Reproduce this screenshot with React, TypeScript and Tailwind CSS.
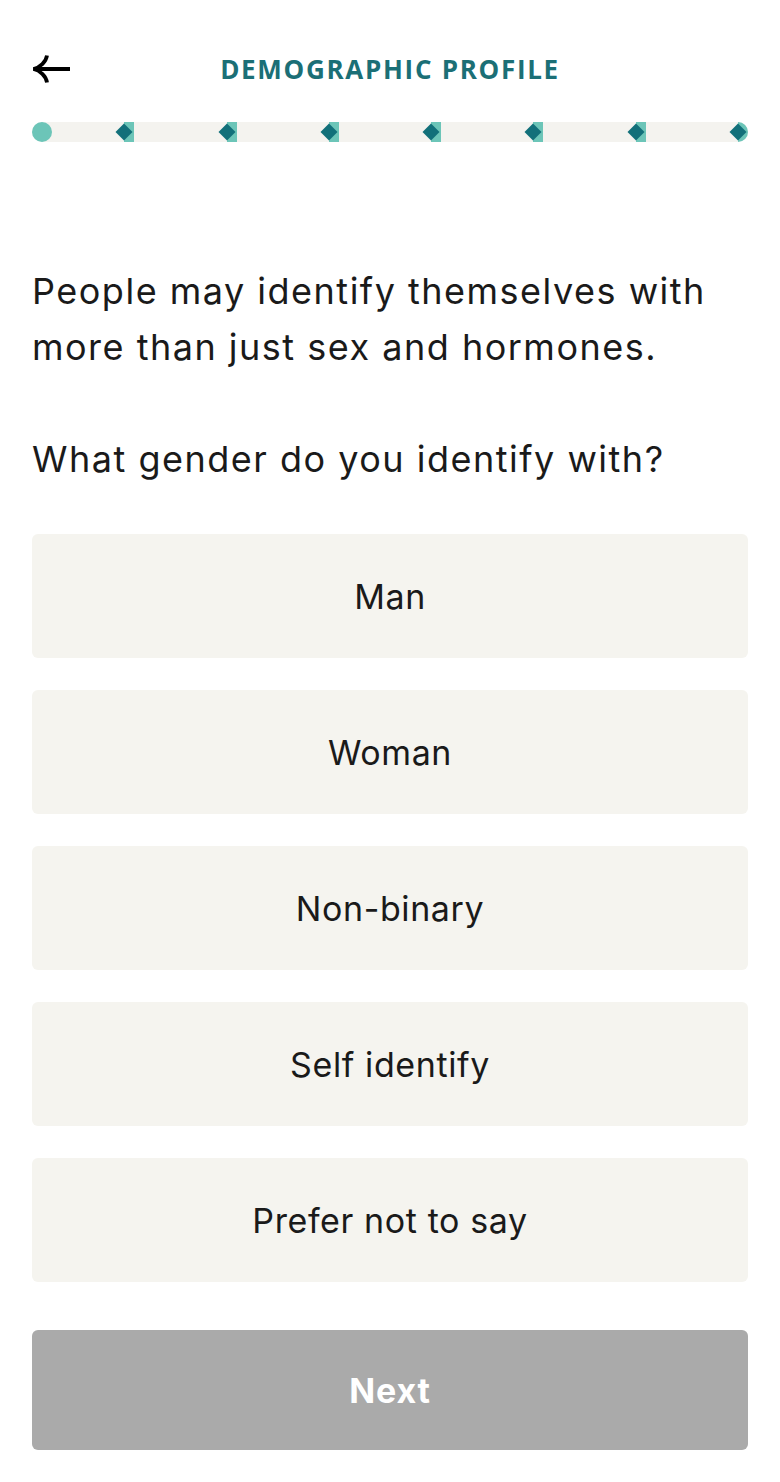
import React from "react";

const options = ["Man", "Woman", "Non-binary", "Self identify", "Prefer not to say"];

function Diamond() {
  return (
    <div className="absolute left-0 top-1/2 h-[12px] w-[12px] -translate-x-1/2 -translate-y-1/2 rotate-45 bg-[#12707a]" />
  );
}

function Progress() {
  const segs = [0, 1, 2, 3, 4, 5, 6];
  return (
    <div className="relative flex h-[20px] w-full items-stretch rounded-full bg-[#f4f3ef]">
      <div className="absolute left-0 top-0 h-[20px] w-[20px] rounded-full bg-[#6cc5b8]" />
      {segs.map((i) => (
        <div key={i} className="flex flex-1 justify-end">
          <div
            className={
              i === 6
                ? "relative h-[20px] w-[10px] rounded-r-full bg-[#6cc5b8]"
                : "relative h-[20px] w-[10px] bg-[#6cc5b8]"
            }
          >
            <Diamond />
          </div>
        </div>
      ))}
    </div>
  );
}

export default function App() {
  return (
    <div
      className="min-h-screen w-full bg-white px-8 text-[#1a1a1a]"
      style={{ fontFamily: "Inter, 'Noto Sans', sans-serif" }}
    >
      <div className="relative flex h-[48px] items-center justify-center pt-[45px] box-content">
        <div className="absolute left-0 top-[45px] flex h-[48px] items-center">
          <svg width="40" height="30" viewBox="0 0 40 30" fill="none">
            <path d="M1.5 15H38" stroke="#000" strokeWidth="3.8" />
            <path d="M15 1.5C14 8 8 13.5 1.5 15C8 16.5 14 22 15 28.5" stroke="#000" strokeWidth="3.8" fill="none" />
          </svg>
        </div>
        <h1
          className="text-[26px] font-bold tracking-[1.7px] text-[#1b6f76]"
          style={{ fontFamily: "'Open Sans', sans-serif" }}
        >
          DEMOGRAPHIC PROFILE
        </h1>
      </div>

      <div className="mt-[29px]">
        <Progress />
      </div>

      <p className="mt-[121px] text-[36px] leading-[56px] tracking-[1.5px]">
        People may identify themselves with more than just sex and hormones.
      </p>
      <p className="mt-[56px] text-[36px] leading-[56px] tracking-[1.5px]">What gender do you identify with?</p>

      <div className="mt-[47px] flex flex-col gap-8">
        {options.map((o) => (
          <button
            key={o}
            className="flex h-[124px] w-full items-center justify-center rounded-[6px] bg-[#f5f4ef] text-[34px] tracking-[0.6px] text-[#1a1a1a]"
          >
            {o}
          </button>
        ))}
      </div>

      <button className="mt-[48px] flex h-[120px] w-full items-center justify-center rounded-[6px] bg-[#aaaaaa] text-[34px] font-bold tracking-[0.8px] text-white">
        Next
      </button>
    </div>
  );
}
